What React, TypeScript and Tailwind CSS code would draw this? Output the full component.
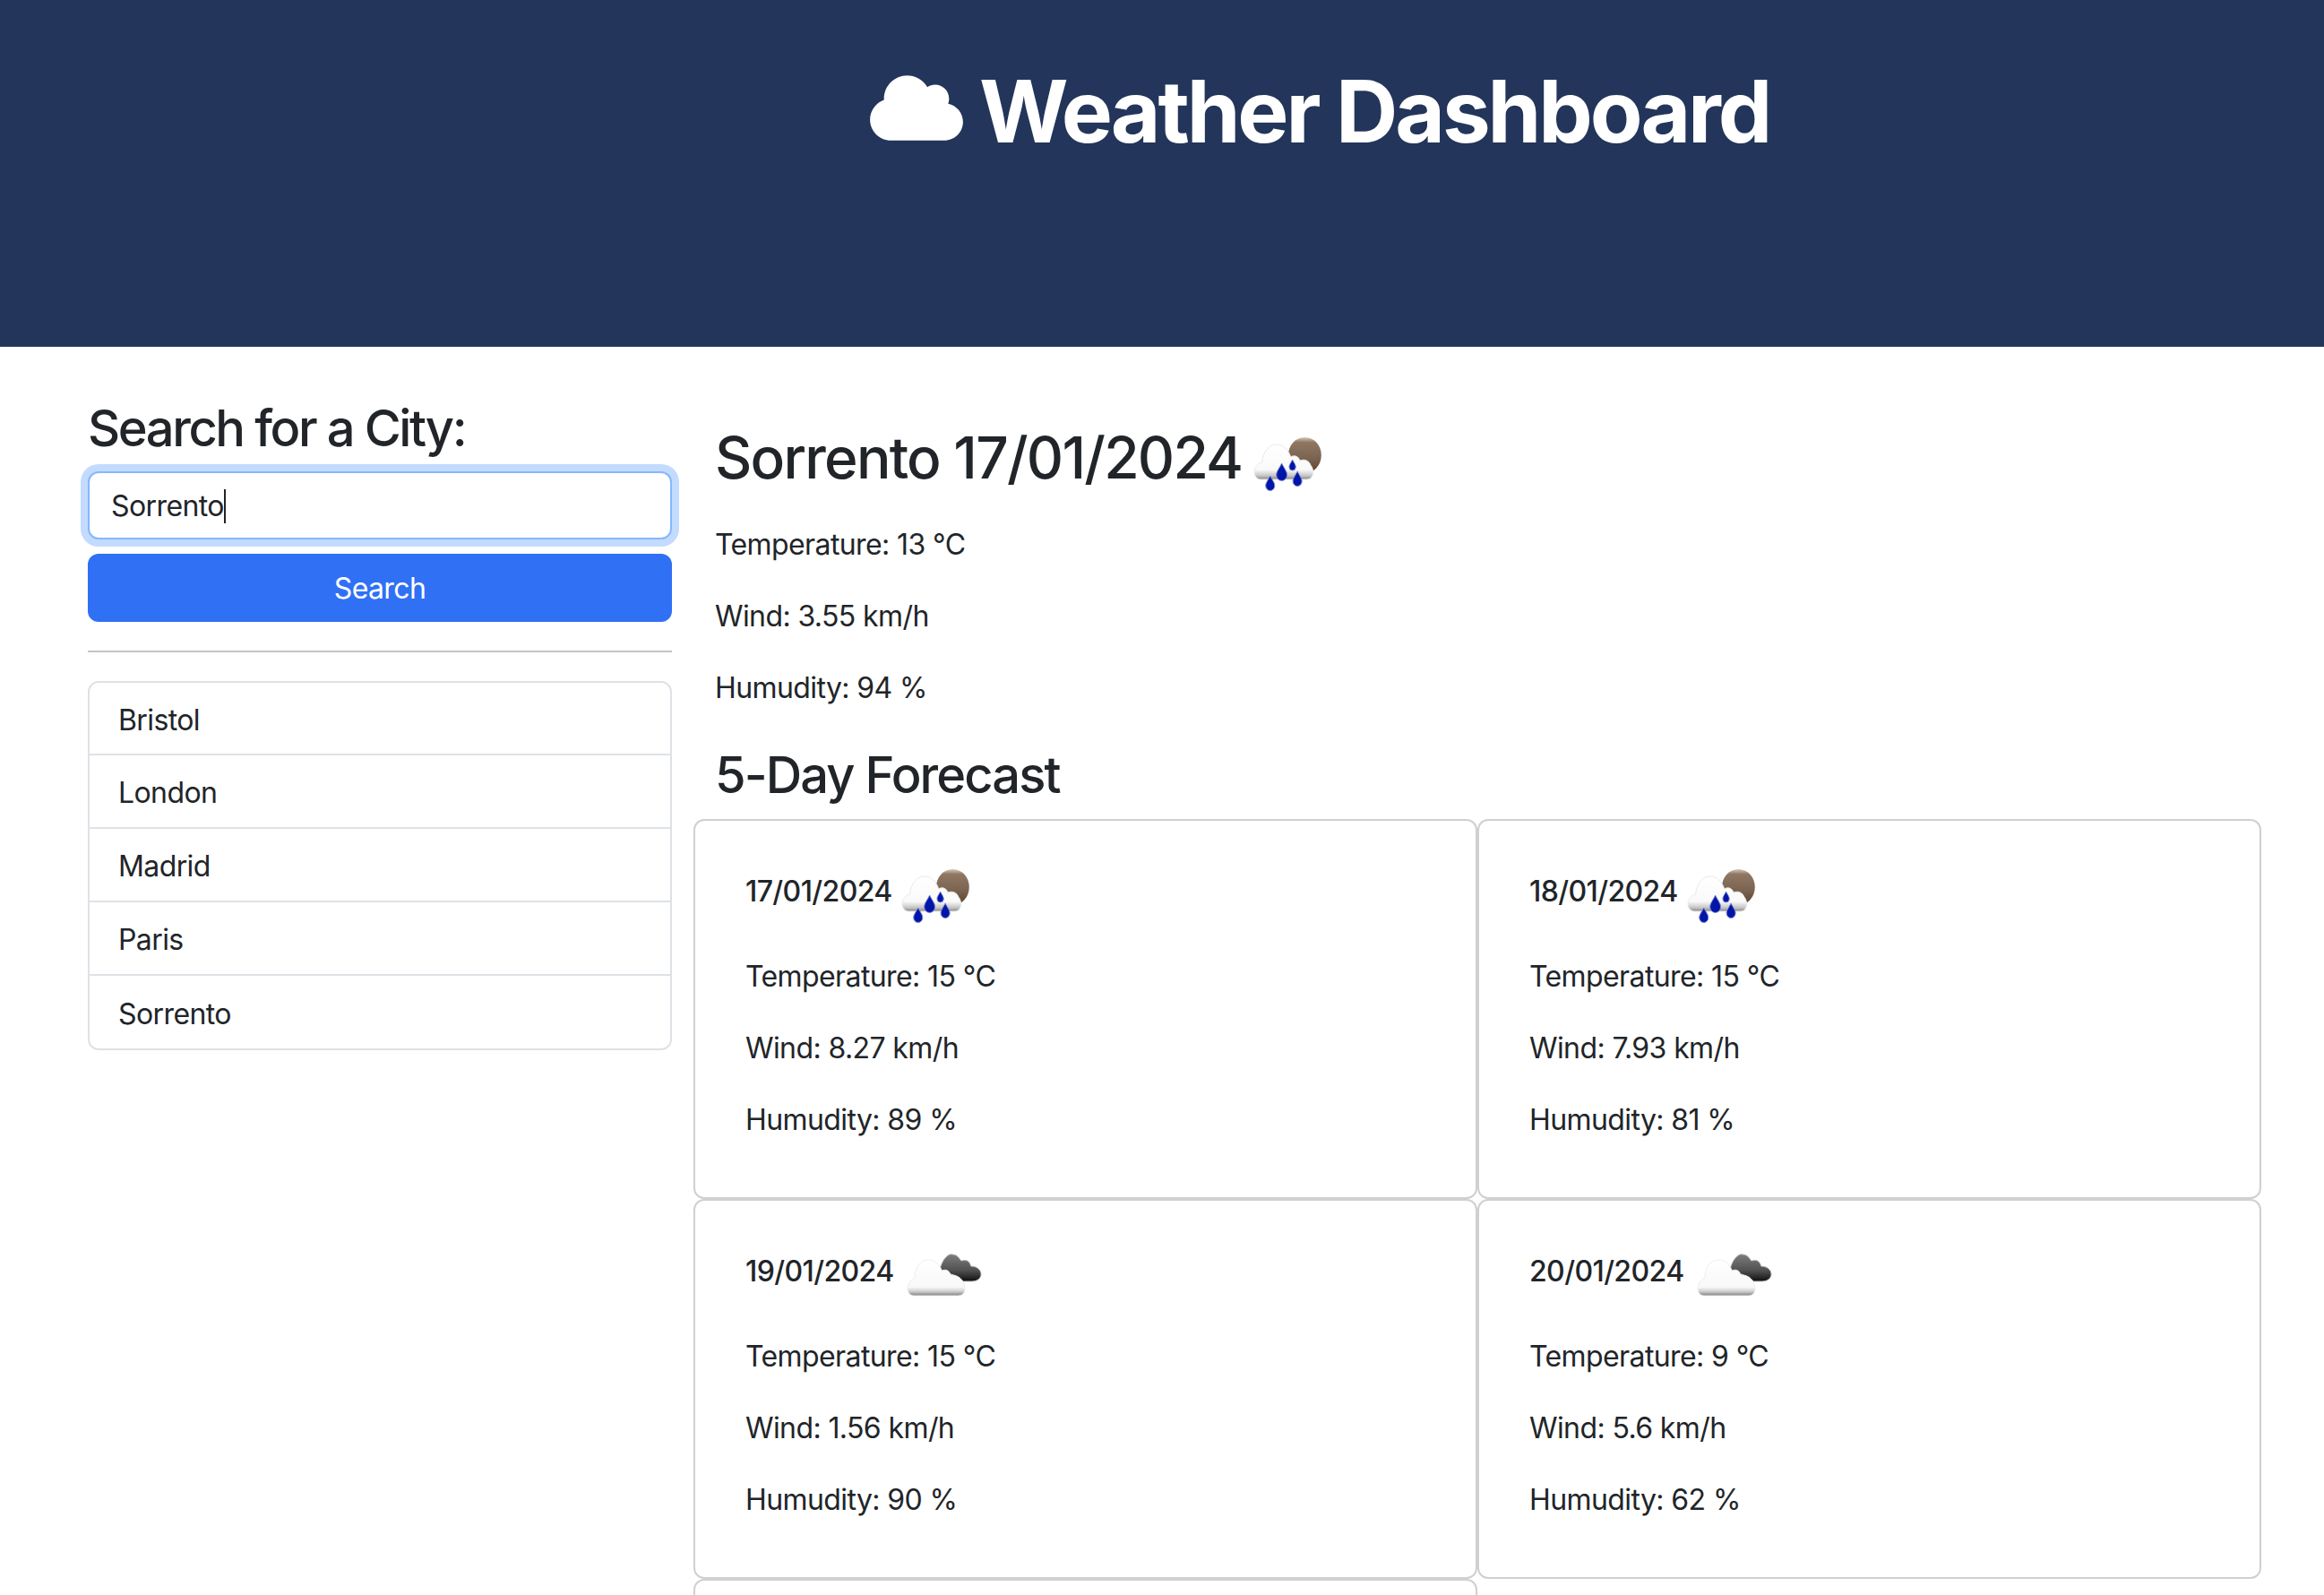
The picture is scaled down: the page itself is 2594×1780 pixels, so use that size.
import React from "react";
import { FaCloud } from "react-icons/fa6";

function dropPath(x: number, y: number, r: number) {
  return `M${x} ${y - 2 * r}C${x + 0.4 * r} ${y - 1.2 * r} ${x + r} ${y - 0.6 * r} ${x + r} ${y}A${r} ${r} 0 0 1 ${x - r} ${y}C${x - r} ${y - 0.6 * r} ${x - 0.4 * r} ${y - 1.2 * r} ${x} ${y - 2 * r}Z`;
}

function RainIcon({ uid, className }: { uid: string; className: string }) {
  const drops = [[42, 60, 6.5], [28, 72, 5.5], [61, 67, 5.5], [55, 51, 4]];
  return (
    <svg viewBox="0 0 100 100" preserveAspectRatio="none" className={className} aria-hidden="true">
      <defs>
        <linearGradient id={`rm${uid}`} x1="0" y1="0" x2="0" y2="1"><stop offset="0" stopColor="#d8c8b6" /><stop offset=".14" stopColor="#8f7763" /><stop offset=".6" stopColor="#7a6350" /><stop offset="1" stopColor="#57432f" /></linearGradient>
        <linearGradient id={`rc${uid}`} x1="0" y1="0" x2="0" y2="1"><stop offset="0" stopColor="#ffffff" /><stop offset=".72" stopColor="#fafafa" /><stop offset=".9" stopColor="#c4c4c4" /><stop offset="1" stopColor="#858585" /></linearGradient>
        <filter id={`rb${uid}`} x="-10%" y="-10%" width="120%" height="120%"><feGaussianBlur stdDeviation="0.7" /></filter>
      </defs>
      <g filter={`url(#rb${uid})`}>
        <circle cx="70" cy="38" r="20" fill={`url(#rm${uid})`} />
        <path d="M17 65C11 65 8 60 9 55C10 50 14 47 18 46C19 34 27 26 36 26C44 26 50 32 53 40C58 37 63 40 64 44C70 42 75 44 77 49C80 52 81 58 79 61C78 64 75 65 72 65Z" fill={`url(#rc${uid})`} stroke="#e8e8e8" strokeWidth="1" />
        {drops.map(([x, y, r], i) => (
          <path key={i} d={dropPath(x, y, r)} fill="#0416a8" stroke="#7f8ad0" strokeWidth="1" />
        ))}
      </g>
    </svg>
  );
}

function CloudIcon({ uid, className }: { uid: string; className: string }) {
  return (
    <svg viewBox="0 0 100 100" preserveAspectRatio="none" className={className} aria-hidden="true">
      <defs>
        <linearGradient id={`cd${uid}`} x1="0" y1="0" x2="0" y2="1"><stop offset="0" stopColor="#7d7d7d" /><stop offset=".6" stopColor="#505050" /><stop offset="1" stopColor="#111111" /></linearGradient>
        <linearGradient id={`cw${uid}`} x1="0" y1="0" x2="0" y2="1"><stop offset="0" stopColor="#ffffff" /><stop offset=".76" stopColor="#f8f8f8" /><stop offset=".88" stopColor="#cfcfcf" /><stop offset="1" stopColor="#7f7f7f" /></linearGradient>
        <filter id={`cb${uid}`} x="-10%" y="-10%" width="120%" height="120%"><feGaussianBlur stdDeviation="0.7" /></filter>
      </defs>
      <g filter={`url(#cb${uid})`}>
        <path d="M50 42C53 30 60 22 66 24C72 24 74 30 76 31C82 29 86 32 87 37C94 37 99 41 99 46C99 51 94 54 88 54L76 54C70 48 63 44 58 46Z" fill={`url(#cd${uid})`} stroke="#c4c4c4" strokeWidth="1" />
        <path d="M20 70C14 70 12 64 13 60C14 54 18 52 21 50C21 38 28 30 37 30C45 30 50 35 53 42C58 40 62 42 63 47C72 46 80 53 80 62C80 67 77 70 72 70Z" fill={`url(#cw${uid})`} stroke="#ededed" strokeWidth="1" />
      </g>
    </svg>
  );
}

type Day = { date: string; temp: string; wind: string; hum: string; rain: boolean };
const days: Day[] = [
  { date: "17/01/2024", temp: "15", wind: "8.27", hum: "89", rain: true },
  { date: "18/01/2024", temp: "15", wind: "7.93", hum: "81", rain: true },
  { date: "19/01/2024", temp: "15", wind: "1.56", hum: "90", rain: false },
  { date: "20/01/2024", temp: "9", wind: "5.6", hum: "62", rain: false },
];
const cities = ["Bristol", "London", "Madrid", "Paris", "Sorrento"];

export default function App() {
  return (
    <div className="h-[1780px] overflow-hidden bg-white text-[#212529] font-['Inter','Liberation_Sans',sans-serif] text-[32px] leading-[48px] tracking-[-0.6px]">
      <header className="h-[387px] bg-[#23355a] pl-[971px] pt-[72px] text-white">
        <h1 className="flex items-center gap-[18px] text-[96px] leading-[104px] font-bold tracking-[-3.1px]">
          <FaCloud className="w-[104px] h-[83px] -mt-[8px]" />
          Weather Dashboard
        </h1>
      </header>
      <div className="flex pl-[98px]">
        <aside className="w-[652px] shrink-0 pt-[59px]">
          <h3 className="text-[56px] leading-[64px] font-medium mb-[16px] tracking-[-2.4px]">Search for a City:</h3>
          <div className="h-[76px] rounded-[12px] border-2 border-[#86b7fe] ring-8 ring-[#0d6efd40] bg-white flex items-center px-[24px] pt-[2px]">
            Sorrento<span className="w-[2px] h-[38px] bg-[#212529]" />
          </div>
          <button className="mt-[16px] w-full h-[76px] rounded-[12px] bg-[#3070f5] text-white pt-[2px]">Search</button>
          <hr className="mt-[32px] border-t-2 border-[#c4c4c4]" />
          <ul className="mt-[32px] rounded-[12px] border-2 border-[#dee2e6] divide-y-2 divide-[#dee2e6]">
            {cities.map((c) => (
              <li key={c} className="h-[82px] first:h-[81px] last:h-[81px] flex items-center px-[32px] pt-[4px]">{c}</li>
            ))}
          </ul>
        </aside>
        <main className="ml-[24px] w-[1750px] shrink-0">
          <section className="pl-[24px] pt-[74px]">
            <h2 className="flex items-center text-[64px] leading-[72px] font-medium gap-[6px] tracking-[-1.75px]">
              Sorrento 17/01/2024
              <RainIcon uid="m" className="w-[92px] h-[100px] translate-y-[9px]" />
            </h2>
            <p className="mt-[23px]">Temperature: 13 °C</p>
            <p className="mt-[32px]">Wind: 3.55 km/h</p>
            <p className="mt-[32px]">Humudity: 94 %</p>
            <h3 className="mt-[41px] text-[56px] leading-[64px] font-medium tracking-[-1.9px]">5-Day Forecast</h3>
          </section>
          <div className="grid grid-cols-2 mt-[17px]">
            {days.map((d, i) => (
              <article key={d.date} className="h-[424px] rounded-[12px] border-2 border-[#d0d0d0] pl-[56px] pt-[29px]">
                <h5 className="flex items-center h-[100px] text-[32px] font-medium gap-[3px]">
                  {d.date}
                  {d.rain ? <RainIcon uid={String(i)} className="w-[92px] h-[100px] translate-y-[7px]" /> : <CloudIcon uid={String(i)} className="w-[95px] h-[100px] translate-y-[7px]" />}
                </h5>
                <p className="mt-[21px]">Temperature: {d.temp} °C</p>
                <p className="mt-[32px]">Wind: {d.wind} km/h</p>
                <p className="mt-[32px]">Humudity: {d.hum} %</p>
              </article>
            ))}
            <article className="h-[424px] rounded-[12px] border-2 border-[#d0d0d0]" />
          </div>
        </main>
      </div>
    </div>
  );
}
